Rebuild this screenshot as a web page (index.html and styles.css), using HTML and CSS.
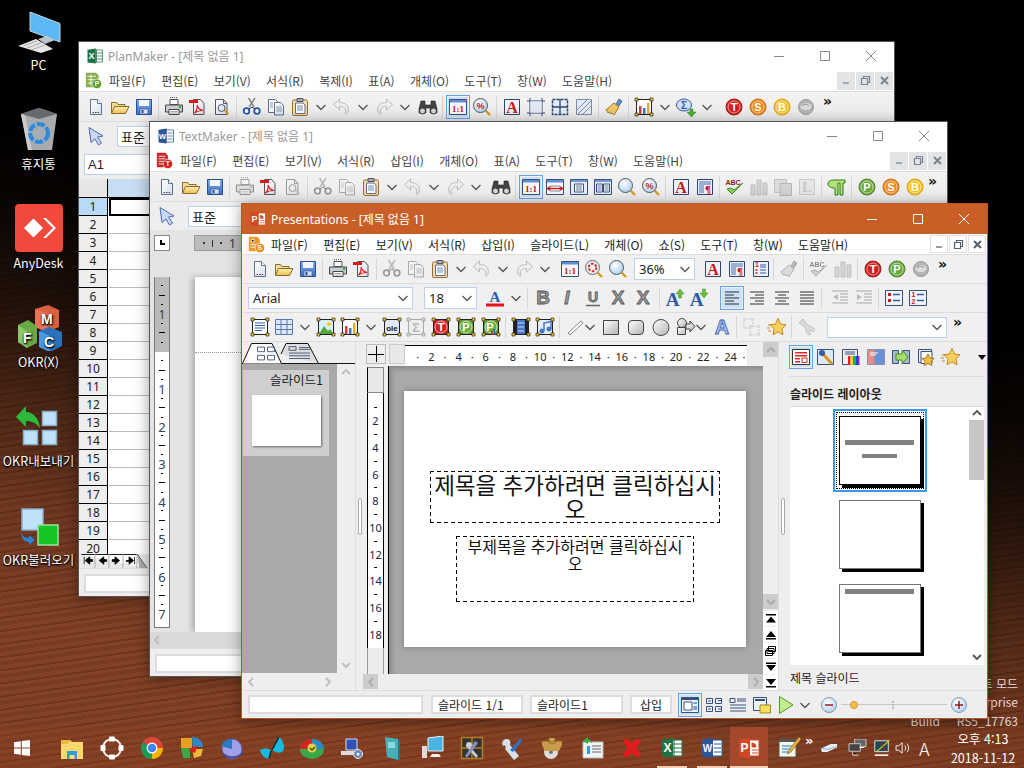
FILE: index.html
```html
<!DOCTYPE html>
<html lang="ko">
<head>
<meta charset="utf-8">
<title>SoftMaker Office</title>
<link rel="stylesheet" href="styles.css">
</head>
<body>
<svg class="defs" width="0" height="0" aria-hidden="true">
  <defs>
    <linearGradient id="gBlue" x1="0" y1="0" x2="0" y2="1"><stop offset="0" stop-color="#7fb0ee"/><stop offset="1" stop-color="#3f6fc4"/></linearGradient>
    <linearGradient id="gFold" x1="0" y1="0" x2="0" y2="1"><stop offset="0" stop-color="#fff0b0"/><stop offset="1" stop-color="#eebc50"/></linearGradient>
    <linearGradient id="gGray" x1="0" y1="0" x2="1" y2="1"><stop offset="0" stop-color="#fff"/><stop offset="1" stop-color="#b4b4b4"/></linearGradient>
    <radialGradient id="gSky" cx=".4" cy=".35" r=".8"><stop offset="0" stop-color="#fff"/><stop offset="1" stop-color="#9cc8ee"/></radialGradient>
    <linearGradient id="gPage" x1="0" y1="0" x2="1" y2="1"><stop offset="0" stop-color="#fff"/><stop offset="1" stop-color="#d6deec"/></linearGradient>
  </defs>
</svg>
<svg class="sprites" aria-hidden="true">
  <symbol id="new" viewBox="0 0 20 20"><path d="M4.500 2.500h7l4 4v11h-11z" fill="url(#gPage)" stroke="#5f6f8a"/><path d="M11.500 2.500v4h4" fill="#fff" stroke="#5f6f8a"/><path d="M6.500 15.500h1.500m1 0h1.500m1 0h1.500" stroke="#445"/></symbol>
  <symbol id="open" viewBox="0 0 20 20"><path d="M1.500 16V5.500h5l1.500 2h7V10" fill="#f3dc98" stroke="#8a6c2c"/><path d="M1.500 16.500 4.500 9.500h14.500l-3.500 7z" fill="url(#gFold)" stroke="#8a6c2c"/></symbol>
  <symbol id="save" viewBox="0 0 20 20"><path d="M2.500 2.500h15v15h-15z" fill="url(#gBlue)" stroke="#2c4c94"/><path d="M5 3h10v6H5z" fill="#f4f6fa"/><path d="M6 12h8v5H6z" fill="#d8e2f2" stroke="#2c4c94" stroke-width=".6"/><path d="M7.500 13h2v3h-2z" fill="#2c4c94"/></symbol>
  <symbol id="print" viewBox="0 0 20 20"><path d="M6 2.500h8v5H6z" fill="#fff" stroke="#555"/><path d="M6 .6h1m1 0h1m1 0h1m1 0h1" stroke="#555" /><path d="M1.500 8h17v7h-17z" fill="#c9cdd4" stroke="#444"/><path d="M5 12.500h10v5H5z" fill="#fff" stroke="#444"/><path d="M6.500 14.500h7m-7 1.500h7" stroke="#888" stroke-width=".7"/><circle cx="16" cy="10" r="1.200" fill="#28b030"/></symbol>
  <symbol id="pdf" viewBox="0 0 20 20"><path d="M5.500 2.500h7l3.500 4v11H5.500z" fill="url(#gPage)" stroke="#555"/><path d="M1 3h9v3H1z" fill="#e01818"/><path d="M6.500 16c2-2 3-5 2.500-8 1 3 3 5 6 5.500-3-.2-6 .8-8.500 2.500z" fill="none" stroke="#e01818" stroke-width="1.100"/></symbol>
  <symbol id="prev" viewBox="0 0 20 20"><path d="M3.500 2.500h8l3.500 4v11H3.500z" fill="url(#gPage)" stroke="#556"/><path d="M11.500 2.500v4h3.500" fill="none" stroke="#556"/><circle cx="9.500" cy="11" r="3.500" fill="#dbeaf8" stroke="#556"/><path d="m12.500 13.500 4 3.500" stroke="#d89a20" stroke-width="2"/></symbol>
  <symbol id="cut" viewBox="0 0 20 20"><path d="M7 10 13 1M12 10 6.500 1" stroke="#888" stroke-width="1.500" fill="none"/><circle cx="4.500" cy="14" r="2.800" fill="#fff" stroke="#2458a8" stroke-width="1.800"/><circle cx="15" cy="14" r="2.800" fill="#fff" stroke="#2458a8" stroke-width="1.800"/><path d="M7 12l3-2 3 2" fill="none" stroke="#333"/></symbol>
  <symbol id="copy" viewBox="0 0 20 20"><path d="M2.500 2.500h7l2 2v11h-9z" fill="#f4f7fc" stroke="#5f6f8a"/><path d="M8.500 5.500h6l3 3v9.500h-9z" fill="url(#gPage)" stroke="#5f6f8a"/><path d="M4 6h3M4 8h3M4 10h3M10 10h6m-6 2h6m-6 2h6" stroke="#7888a0" stroke-width=".8"/></symbol>
  <symbol id="paste" viewBox="0 0 20 20"><rect x="2.500" y="3" width="15" height="15.500" rx="1.500" fill="#f2dcb4" stroke="#9c6c28"/><path d="M7 1.500h6v3H7z" fill="#aab" stroke="#556"/><path d="M5.500 6h7.500l2 2v8.500H5.500z" fill="#fff" stroke="#5f6f8a"/><path d="M7 9h6m-6 2h6m-6 2h6" stroke="#5f7fb0" stroke-width=".9"/></symbol>
  <symbol id="undo" viewBox="0 0 20 20"><path d="M1.500 8.500 7.500 3v3.500c6 0 10 3 8.500 9.500-1 1.500-2 2-3 2 2-4 .5-7.500-5.500-7.500V14z" fill="#eee" stroke="#8d8d8d" transform="translate(0 -1)"/></symbol>
  <symbol id="redo" viewBox="0 0 20 20"><path d="M18.500 8.500 12.500 3v3.500c-6 0-10 3-8.500 9.500 1 1.500 2 2 3 2-2-4-.5-7.500 5.500-7.500V14z" fill="#eee" stroke="#8d8d8d" transform="translate(0 -1)"/></symbol>
  <symbol id="chev" viewBox="0 0 18 20"><path d="m4.500 8 4.500 4.500L13.500 8" fill="none" stroke="#555" stroke-width="1.300"/></symbol>
  <symbol id="binoc" viewBox="0 0 20 20"><path d="M3 4h4v4h6V4h4l2 8v4h-7v-5H8v5H1v-4z" fill="#444" stroke="#222" stroke-width=".6"/><circle cx="4.500" cy="14" r="3" fill="#d8d8d8" stroke="#333"/><circle cx="15.500" cy="14" r="3" fill="#d8d8d8" stroke="#333"/></symbol>
  <symbol id="one" viewBox="0 0 20 20"><path d="M1.500 2.500h17v15h-17z" fill="#f6f8fc" stroke="#39507c"/><path d="M2 3h16v2.500H2z" fill="#5f8fd0"/><text x="10" y="15" class="t-11">1:1</text></symbol>
  <symbol id="pct" viewBox="0 0 20 20"><circle cx="8.500" cy="8.500" r="7" fill="url(#gSky)" stroke="#555"/><text x="8.500" y="11.500" class="t-pct">%</text><path d="m13.500 13.500 4.500 4.500" stroke="#d89a20" stroke-width="2.400"/></symbol>
  <symbol id="mag" viewBox="0 0 20 20"><circle cx="8.500" cy="8.500" r="7" fill="url(#gSky)" stroke="#556"/><path d="m13.500 13.500 4.500 4.500" stroke="#d89a20" stroke-width="2.400"/></symbol>
  <symbol id="zmt" viewBox="0 0 20 20"><circle cx="8.500" cy="8.500" r="7" fill="#eee" stroke="#666"/><circle cx="8.500" cy="8.500" r="3.800" fill="none" stroke="#c83030" stroke-width="2" stroke-dasharray="2.500 1.500"/><path d="m13.500 13.500 4.500 4.500" stroke="#d89a20" stroke-width="2.400"/></symbol>
  <symbol id="a" viewBox="0 0 20 20"><path d="M2.500 2.500h15v15h-15z" fill="#eef2fa" stroke="#2c4672"/><text x="10" y="15.500" class="t-A">A</text></symbol>
  <symbol id="para" viewBox="0 0 20 20"><path d="M2.500 2.500h15v15h-15z" fill="#eef2fa" stroke="#2c4672"/><path d="M4 5h12M4 7h12M4 9h5M4 11h5M4 13h5M4 15h5" stroke="#345ca8" stroke-width=".9"/><text x="13" y="15.500" class="t-para">¶</text></symbol>
  <symbol id="nlist" viewBox="0 0 20 20"><path d="M2.500 2.500h15v15h-15z" fill="#eef2fa" stroke="#2c4672"/><text x="6" y="8" class="t-n">1</text><path d="M4.500 11h2m-2 3h2" stroke="#c81818" stroke-width="1.600"/><path d="M9 6h6m-6 2h6m-6 3h6m-6 3h6" stroke="#345ca8"/></symbol>
  <symbol id="brush" viewBox="0 0 20 20"><path d="m12 7 3-5 3 2-3 5z" fill="#5f8fd0" stroke="#39507c" stroke-width=".7"/><path d="M2 13 10 6l5 4-5 8-2-2-1 1-1-2-2 1-1-2z" fill="#eec866" stroke="#9c7a28"/></symbol>
  <symbol id="crop" viewBox="0 0 20 20"><path d="M4 1v18M16 1v18M1 4h18M1 16h18" stroke="#2c4672"/><path d="M4 4h12v12H4z" fill="#dbe6f6" opacity=".7"/></symbol>
  <symbol id="grid" viewBox="0 0 20 20"><path d="M2.500 2.500h15v15h-15z" fill="#e4ecf8" stroke="#2c4672" stroke-width="1.500" stroke-dasharray="3 1"/><path d="M10 2v16M2 10h16" stroke="#2c4672" stroke-width="1.300"/></symbol>
  <symbol id="hatch" viewBox="0 0 20 20"><path d="M2.500 2.500h15v15h-15z" fill="#e4ecf8" stroke="#7a8cb0"/><path d="m3 13 10-10M3 18 18 3m-10 15 10-10" stroke="#7a8cb0"/></symbol>
  <symbol id="h" viewBox="0 0 20 20"><path d="M1 1h3v3H1zM16 1h3v3h-3zM1 16h3v3H1zM16 16h3v3h-3z" fill="#f4c830" stroke="#222" stroke-width=".7"/></symbol>
  <symbol id="ochart" viewBox="0 0 20 20"><path d="M2.500 2.500h15v15h-15z" fill="#fff" stroke="#222"/><path d="M5 9h2.500v8H5z" fill="#d04040"/><path d="M9 11h2.500v6H9z" fill="#4070c8"/><path d="M13 6h2.500v11H13z" fill="#e0b030"/><use href="#h" width="20" height="20"/></symbol>
  <symbol id="sigma" viewBox="0 0 20 20"><ellipse cx="8" cy="8" rx="7.500" ry="6" fill="#cfe0f8" stroke="#345ca8"/><text x="8" y="12" class="t-sig">Σ</text><path d="M11 15h3v-3h3v3h3l-4.500 5z" fill="#48b030" stroke="#2c8020" stroke-width=".5"/></symbol>
  <symbol id="ct" viewBox="0 0 20 20"><circle cx="10" cy="10" r="8" fill="#d41f1f" stroke="#a81616"/><circle cx="10" cy="10" r="6" fill="none" stroke="#fff" stroke-opacity=".55"/><text x="10" y="14" class="t-c">T</text></symbol>
  <symbol id="cs" viewBox="0 0 20 20"><circle cx="10" cy="10" r="8" fill="#f08a1e" stroke="#cc6c10"/><circle cx="10" cy="10" r="6" fill="none" stroke="#fff" stroke-opacity=".55"/><text x="10" y="14" class="t-c">S</text></symbol>
  <symbol id="cb" viewBox="0 0 20 20"><circle cx="10" cy="10" r="8" fill="#f8c020" stroke="#e0a010"/><circle cx="10" cy="10" r="6" fill="none" stroke="#fff" stroke-opacity=".6"/><text x="10" y="14" class="t-c">B</text></symbol>
  <symbol id="cp" viewBox="0 0 20 20"><circle cx="10" cy="10" r="8" fill="#68a83a" stroke="#4c8a28"/><circle cx="10" cy="10" r="6" fill="none" stroke="#fff" stroke-opacity=".6"/><text x="10" y="14" class="t-c">P</text></symbol>
  <symbol id="cg" viewBox="0 0 20 20"><circle cx="10" cy="10" r="7.500" fill="#b4b4b4" stroke="#999"/><path d="M4 10c2-4 8-5 11-2 1 2-1 5-4 5-3 0-5 0-7-3z" fill="#ddd"/><path d="M6 9c2-2 5-2 7 0" stroke="#888" fill="none"/></symbol>
  <symbol id="abc" viewBox="0 0 20 20"><text x="8" y="7.500" class="t-abc">ABC</text><path d="m2 12 5 5L18 6l-9 7-3-2z" fill="#8ad060" stroke="#3e8e22"/></symbol>
  <symbol id="bars" viewBox="0 0 20 20"><path d="M2 8h4v10H2zM8 3h4v15H8zM14 6h4v12h-4z" fill="#bbb" stroke="#999"/></symbol>
  <symbol id="lay" viewBox="0 0 20 20"><path d="M1.500 2.500h12v13h-12z" fill="#ccc" stroke="#999"/><path d="M7 6.500h11.500v12H7z" fill="#bbb" stroke="#888"/></symbol>
  <symbol id="lbox" viewBox="0 0 20 20"><path d="M2.500 2.500h15v15h-15z" fill="#ddd" stroke="#aaa"/><text x="10" y="15" class="t-L">L</text></symbol>
  <symbol id="pil" viewBox="0 0 20 20"><path d="M7 3h11v3h-2v12h-3V6h-2v12H8v-7C3 11 1 9 1 7c0-3 3-4 6-4z" fill="#b6e07a" stroke="#2c7a1c"/></symbol>
  <symbol id="zw" viewBox="0 0 20 20"><path d="M1.500 2.500h17v15h-17z" fill="#f6f8fc" stroke="#39507c"/><path d="M2 3h16v2.500H2z" fill="#5f8fd0"/><path d="M5 9h10v5H5z" fill="#fff" stroke="#888"/><path d="M2.500 11.500h15" stroke="#c81818" stroke-width="1.500"/><path d="m1.500 11.500 3-2.500v5zM18.500 11.500l-3-2.500v5z" fill="#c81818"/></symbol>
  <symbol id="pg1" viewBox="0 0 20 20"><path d="M1.500 2.500h17v15h-17z" fill="#e8eef8" stroke="#39507c"/><path d="M2 3h16v2H2z" fill="#7a9ad0"/><path d="M5.500 7h9v8h-9z" fill="#fff" stroke="#39507c"/><path d="M7 9h6m-6 2h6m-6 2h6" stroke="#39507c" stroke-width=".8"/></symbol>
  <symbol id="pg2" viewBox="0 0 20 20"><path d="M1.500 2.500h17v15h-17z" fill="#e8eef8" stroke="#39507c"/><path d="M2 3h16v2H2z" fill="#7a9ad0"/><path d="M3.500 7h6v8h-6zM10.500 7h6v8h-6z" fill="#fff" stroke="#39507c"/><path d="M4.500 9h4m-4 2h4m-4 2h4m3-4h4m-4 2h4m-4 2h4" stroke="#39507c" stroke-width=".8"/></symbol>
  <symbol id="ptr" viewBox="0 0 20 20"><path d="M3 1.500 17 10l-5.500 1 4 6-3 2-3.500-6-4 3.500z" fill="#c9d7f2" stroke="#4a6ab0"/></symbol>
  <symbol id="fB" viewBox="0 0 20 20"><text x="10" y="16" class="t-f">B</text></symbol>
  <symbol id="fI" viewBox="0 0 20 20"><text x="10" y="16" class="t-f t-i">I</text></symbol>
  <symbol id="fU" viewBox="0 0 20 20"><text x="10" y="14" class="t-f t-u">U</text><path d="M3 17.500h14" stroke="#666" stroke-width="1.500"/></symbol>
  <symbol id="fX" viewBox="0 0 20 20"><text x="10" y="16" class="t-f">X</text></symbol>
  <symbol id="colA" viewBox="0 0 20 20"><text x="10" y="14" class="t-col">A</text><path d="M1 15.500h18v3H1z" fill="#e8101a"/></symbol>
  <symbol id="aup" viewBox="0 0 20 20"><text x="7.500" y="18" class="t-big">A</text><path d="M15 1l4 5h-2.500v4h-3V6H11z" fill="#68c040" stroke="#3e8e22" stroke-width=".5"/></symbol>
  <symbol id="adn" viewBox="0 0 20 20"><text x="7.500" y="18" class="t-big">A</text><path d="M15 10l4-5h-2.500V1h-3v4H11z" fill="#68c040" stroke="#3e8e22" stroke-width=".5"/></symbol>
  <symbol id="al" viewBox="0 0 20 20"><path d="M3 4h14M3 7h9M3 10h14M3 13h9M3 16h14" stroke="#333" stroke-width="1.200"/></symbol>
  <symbol id="ar" viewBox="0 0 20 20"><path d="M3 4h14M8 7h9M3 10h14M8 13h9M3 16h14" stroke="#333" stroke-width="1.200"/></symbol>
  <symbol id="ac" viewBox="0 0 20 20"><path d="M3 4h14M6 7h8M3 10h14M6 13h8M3 16h14" stroke="#333" stroke-width="1.200"/></symbol>
  <symbol id="aj" viewBox="0 0 20 20"><path d="M3 4h14M3 7h14M3 10h14M3 13h14M3 16h14" stroke="#333" stroke-width="1.200"/></symbol>
  <symbol id="ind" viewBox="0 0 20 20"><path d="M2 3h16M10 6h8M10 9h8M10 12h8M2 15h16" stroke="#aaa" stroke-width="1.200"/><path d="M8 6 3 9l5 3z" fill="#bbb"/></symbol>
  <symbol id="oud" viewBox="0 0 20 20"><path d="M2 3h16M10 6h8M10 9h8M10 12h8M2 15h16" stroke="#aaa" stroke-width="1.200"/><path d="m3 6 5 3-5 3z" fill="#bbb"/></symbol>
  <symbol id="bul" viewBox="0 0 20 20"><path d="M1.500 2.500h17v15h-17z" fill="#f0f4fa" stroke="#39507c"/><path d="M4 5h3v3H4zM4 11h3v3H4z" fill="#c82020"/><path d="M9 6.500h7M9 12.500h7" stroke="#345ca8" stroke-width="1.500"/></symbol>
  <symbol id="num" viewBox="0 0 20 20"><path d="M1.500 2.500h17v15h-17z" fill="#f0f4fa" stroke="#39507c"/><text x="5.500" y="9" class="t-n">1</text><text x="5.500" y="16" class="t-n">2</text><path d="M9 6.500h7M9 12.500h7" stroke="#345ca8" stroke-width="1.500"/></symbol>
  <symbol id="ofr" viewBox="0 0 20 20"><path d="M2.500 2.500h15v15h-15z" fill="#fff" stroke="#222"/><path d="M5 6h10M5 8.500h10M5 11h10M5 13.500h7" stroke="#345ca8"/><use href="#h" width="20" height="20"/></symbol>
  <symbol id="tab" viewBox="0 0 20 20"><path d="M1.500 2.500h17v15h-17z" fill="#dfe8f6" stroke="#5a78b0"/><path d="M7 3v14M13 3v14M2 7.500h16M2 12.500h16" stroke="#5a78b0"/></symbol>
  <symbol id="oimg" viewBox="0 0 20 20"><path d="M2.500 2.500h15v15h-15z" fill="#d8eef8" stroke="#222"/><circle cx="13" cy="7" r="2" fill="#f4c830"/><path d="M3 17l5-8 4 5 2-2 3.500 5z" fill="#58a838"/><use href="#h" width="20" height="20"/></symbol>
  <symbol id="oole" viewBox="0 0 20 20"><path d="M2.500 2.500h15v15h-15z" fill="#dfe8f6" stroke="#222"/><text x="10" y="14" class="t-ole">ole</text><use href="#h" width="20" height="20"/></symbol>
  <symbol id="osum" viewBox="0 0 20 20"><path d="M2.500 2.500h15v15h-15z" fill="#eee" stroke="#aaa"/><text x="10" y="15" class="t-osum">Σ</text><path d="M1 1h3v3H1zM16 1h3v3h-3zM1 16h3v3H1zM16 16h3v3h-3z" fill="#ddd" stroke="#999" stroke-width=".7"/></symbol>
  <symbol id="ot" viewBox="0 0 20 20"><path d="M2.500 2.500h15v15h-15z" fill="#c82020" stroke="#222"/><circle cx="10" cy="10" r="6" fill="#d82020" stroke="#fff" stroke-opacity=".7"/><text x="10" y="13.500" class="t-c">T</text><use href="#h" width="20" height="20"/></symbol>
  <symbol id="op" viewBox="0 0 20 20"><path d="M2.500 2.500h15v15h-15z" fill="#5c9a30" stroke="#222"/><circle cx="10" cy="10" r="6" fill="#6cae3c" stroke="#fff" stroke-opacity=".7"/><text x="10" y="13.500" class="t-c">P</text><use href="#h" width="20" height="20"/></symbol>
  <symbol id="opc" viewBox="0 0 20 20"><path d="M2.500 2.500h15v15h-15z" fill="#5c9a30" stroke="#222"/><circle cx="10" cy="10" r="6" fill="#6cae3c" stroke="#fff" stroke-opacity=".7"/><text x="9" y="13.500" class="t-c">P</text><path d="M10 14h1.500v4H10z" fill="#c82020"/><path d="M12.500 12H14v6h-1.500z" fill="#3060c0"/><use href="#h" width="20" height="20"/></symbol>
  <symbol id="ofilm" viewBox="0 0 20 20"><path d="M2.500 2.500h15v15h-15z" fill="#4878c8" stroke="#222"/><path d="M3 3h3v14H3zM14 3h3v14h-3z" fill="#222"/><path d="M7 6h6M7 10h6M7 14h6" stroke="#cfe0f8"/><use href="#h" width="20" height="20"/></symbol>
  <symbol id="omus" viewBox="0 0 20 20"><path d="M2.500 2.500h15v15h-15z" fill="#e4ecf8" stroke="#222"/><circle cx="7" cy="14" r="2.500" fill="#4878c8"/><circle cx="14" cy="12" r="2.500" fill="#4878c8"/><path d="M9 14V6l7-1.500V12" fill="none" stroke="#4878c8" stroke-width="1.500"/><use href="#h" width="20" height="20"/></symbol>
  <symbol id="line" viewBox="0 0 20 20"><path d="m3 16 13-12 2 2L5 18z" fill="#fff" stroke="#888"/></symbol>
  <symbol id="srect" viewBox="0 0 20 20"><path d="M2.500 3.500h15v14h-15z" fill="url(#gGray)" stroke="#444"/></symbol>
  <symbol id="sround" viewBox="0 0 20 20"><rect x="2.500" y="3.500" width="15" height="14" rx="3.500" fill="url(#gGray)" stroke="#444"/></symbol>
  <symbol id="scirc" viewBox="0 0 20 20"><circle cx="10" cy="10.500" r="8" fill="url(#gGray)" stroke="#444"/></symbol>
  <symbol id="sshape" viewBox="0 0 20 20"><circle cx="6" cy="6" r="4.500" fill="url(#gGray)" stroke="#444"/><path d="M1.500 10.500h8v7h-8z" fill="url(#gGray)" stroke="#444"/><path d="M10 7h4V4l5 5.500-5 5.500v-3h-4z" fill="url(#gGray)" stroke="#444"/></symbol>
  <symbol id="wart" viewBox="0 0 20 20"><text x="10" y="17" class="t-wa">A</text></symbol>
  <symbol id="grp" viewBox="0 0 20 20"><path d="M2 2h9v9H2zM8 9h9v9H8z" fill="none" stroke="#aaa" stroke-dasharray="2 1"/><path d="M1 1h3v3H1zM9 1h3v3H9zM1 9h3v3H1zM7 8h3v3H7zM15 8h3v3h-3zM7 16h3v3H7zM15 16h3v3h-3z" fill="#ccc"/></symbol>
  <symbol id="star" viewBox="0 0 20 20"><path d="m11 1.500 2.500 5.500 5.500.8-4 4 1 6-5-3-5 3 1-6-4-4 5.500-.8z" fill="#f8d060" stroke="#c08820"/><path d="M1 8h3M0 11h3M1 14h3" stroke="#c08820"/></symbol>
  <symbol id="wren" viewBox="0 0 20 20"><path d="M2 6 6 2l2 3 4 4 3 1 3 3-2 2-2-2-2 2 2 2-2 1-3-3V11L5 8z" fill="#ccc" stroke="#999"/></symbol>
  <symbol id="rlay" viewBox="0 0 20 20"><path d="M1.500 2.500h17v15h-17z" fill="#fff" stroke="#333"/><path d="M4 5h12v1.500H4zM4 8h12v1.500H4zM4 11h5v1.500H4zM4 14h5v1.500H4z" fill="#d82828"/><path d="M11 11h5v4.500h-5z" fill="none" stroke="#d82828"/></symbol>
  <symbol id="rwan" viewBox="0 0 20 20"><path d="M1.500 2.500h16v15h-16z" fill="#dfe8f6" stroke="#39507c"/><path d="M7 7l9 10" stroke="#d89a20" stroke-width="3"/><circle cx="6" cy="6" r="3" fill="#345ca8"/></symbol>
  <symbol id="rcol" viewBox="0 0 20 20"><path d="M1.500 2.500h15v15h-15z" fill="#eee" stroke="#39507c"/><path d="M4 5h10M4 7h10" stroke="#39507c"/><path d="M7 9h2.500v9H7z" fill="#e02020"/><path d="M9.500 9H12v9H9.500z" fill="#f0d020"/><path d="M12 9h2.500v9H12z" fill="#20b030"/><path d="M14.500 9H17v9h-2.500z" fill="#2040d0"/><path d="M17 9h1.500v9H17z" fill="#a020c0"/></symbol>
  <symbol id="rgra" viewBox="0 0 20 20"><path d="M1.500 2.500h7v15h-7z" fill="#e88a8a" stroke="#8890a8"/><path d="M9 2.500h9.500v15H9z" fill="#6a90d8" stroke="#8890a8"/><path d="M4 6h8M4 8h6" stroke="#fff"/></symbol>
  <symbol id="rarr" viewBox="0 0 20 20"><path d="M1.500 3.500h6v13h-6zM12.500 3.500h6v13h-6z" fill="#aab8d0" stroke="#39507c"/><path d="M5 7h6V3l6 7-6 7v-4H5z" fill="#a8e070" stroke="#3e8e22"/></symbol>
  <symbol id="rstd" viewBox="0 0 20 20"><path d="M2.500 2.500h13v13h-13z" fill="#eee" stroke="#39507c"/><path d="M5 4.500h11v12H5z" fill="#fff" stroke="#39507c"/><path d="m12 7 2 4 4 .5-3 3 1 4-4-2-4 2 1-4-3-3 4-.5z" fill="#f0c040" stroke="#a87820"/></symbol>
  <symbol id="st1" viewBox="0 0 20 20"><path d="M1.500 2.500h17v15h-17z" fill="#eef2fa" stroke="#39507c"/><path d="M2 3h16v2H2z" fill="#39507c"/><path d="M4 7h8v8H4z" fill="#fff" stroke="#39507c"/><path d="M13.500 7H17v2h-3.500zM13.500 11H17v4h-3.500z" fill="#7a9ad0"/></symbol>
  <symbol id="st2" viewBox="0 0 20 20"><path d="M2.500 3.500h6v5h-6zM11.500 3.500h6v5h-6zM2.500 11.500h6v5h-6zM11.500 11.500h6v5h-6z" fill="#eef2fa" stroke="#39507c"/><path d="M4 6h3m7-.5h3M4 14h3m7 0h3" stroke="#39507c"/></symbol>
  <symbol id="st3" viewBox="0 0 20 20"><path d="M2 3.500h5v4H2z" fill="#eef2fa" stroke="#39507c"/><path d="M9 4h9M9 6h9M2 10h16M2 13h16M2 16h16" stroke="#39507c" stroke-width="1.200"/></symbol>
  <symbol id="st4" viewBox="0 0 20 20"><path d="M1.500 2.500h13v13h-13z" fill="#eef2fa" stroke="#39507c"/><path d="M3 4h10v2H3z" fill="#39507c"/><path d="M8 10h10.500v8H8z" fill="#f4e060" stroke="#9c8a20"/></symbol>
  <symbol id="play" viewBox="0 0 20 20"><path d="M3.500 1.500 17 10 3.500 18.500z" fill="#c4ec8c" stroke="#4c9a28"/></symbol>
  <symbol id="zmin" viewBox="0 0 20 20"><circle cx="10" cy="10" r="7.500" fill="url(#gSky)" stroke="#8a9ab0"/><path d="M6 10h8" stroke="#a01818" stroke-width="1.500"/></symbol>
  <symbol id="zpls" viewBox="0 0 20 20"><circle cx="10" cy="10" r="7.500" fill="url(#gSky)" stroke="#8a9ab0"/><path d="M6 10h8M10 6v8" stroke="#a01818" stroke-width="1.500"/></symbol>
  <symbol id="xl" viewBox="0 0 24 24"><path d="M9 4h13v16H9z" fill="#fff" stroke="#1f7244"/><path d="M14 4v16M9 8h13M9 12h13M9 16h13" stroke="#1f7244"/><path d="M2 3.500 13 2v20L2 20.500z" fill="#1f7244"/><text x="7.500" y="16" class="t-app">X</text></symbol>
  <symbol id="wd" viewBox="0 0 24 24"><path d="M9 4h13v16H9z" fill="#fff" stroke="#2b579a"/><path d="M14 8h7M14 12h7M14 16h7" stroke="#2b579a"/><path d="M2 3.500 13 2v20L2 20.500z" fill="#2b579a"/><text x="7.500" y="16" class="t-app t-w">W</text></symbol>
  <symbol id="pp" viewBox="0 0 24 24"><path d="M9 4h13v16H9z" fill="#fff" stroke="#d24726"/><path d="M15 7a4 4 0 0 1 4 4h-4zM15 14h6M15 17h6" stroke="#d24726" fill="#d24726"/><path d="M2 3.500 13 2v20L2 20.500z" fill="#d24726"/><text x="7.500" y="16" class="t-app">P</text></symbol>
  <symbol id="mpm" viewBox="0 0 20 20"><path d="M1 1h12l3 3v14H1z" fill="#88b048"/><path d="M3 5h10M3 9h8M3 13h6M7 3v13" stroke="#fff"/><circle cx="14" cy="14" r="5.500" fill="#5c9a30" stroke="#fff" stroke-width=".7"/><text x="14" y="17" class="t-m">P</text></symbol>
  <symbol id="mtm" viewBox="0 0 20 20"><path d="M1 1h10l3 3v14H1z" fill="#c82828"/><path d="M3 5h8M3 8h8M3 11h6M3 14h6" stroke="#fff"/><circle cx="14" cy="14" r="5.500" fill="#d41f1f" stroke="#fff" stroke-width=".7"/><text x="14" y="17" class="t-m">T</text></symbol>
  <symbol id="mpr" viewBox="0 0 20 20"><path d="M1 1h10l3 3v14H1z" fill="#ee9a2a"/><path d="M4 4h3v3H4zM3 10h7M3 13h6" stroke="#fff"/><circle cx="14" cy="14" r="5.500" fill="#ee8a1a" stroke="#fff" stroke-width=".7"/><text x="14" y="17" class="t-m">S</text></symbol>
</svg>

<div class="desktop">
  <div class="watermark"><p>테스트 모드</p><p>Windows 10 Enterprise</p><p class="wm-b">Build     RS5_17763</p></div>

  <nav class="icons">
    <div class="dicon">
      <svg viewBox="0 0 48 48"><path d="M15 6 45 17.500V36L15 25z" fill="#5cb8f4" stroke="#c8d4dc"/><path d="M23 33 32 30 40 34 30 38z" fill="#b8c4cc"/><path d="M3 40 21 33 38 43 26 47z" fill="#e6e6e6"/><path d="M8 40 22 35m-10 7 14-5m-10 7 14-5" stroke="#999" stroke-width=".8"/></svg>
      <span>PC</span>
    </div>
    <div class="dicon">
      <svg viewBox="0 0 48 48"><path d="M6 9 24 3l18 6-5 36H13z" fill="#a8acb0"/><path d="M6 9 24 3l18 6-18 5z" fill="#666a6e"/><path d="M6 9l7 36h4L10 10z" fill="#c8ccd0"/><circle cx="24" cy="28" r="9" fill="none" stroke="#2a8adf" stroke-width="4" stroke-dasharray="8 2"/></svg>
      <span>휴지통</span>
    </div>
    <div class="dicon">
      <svg viewBox="0 0 48 48"><rect width="48" height="48" rx="4" fill="#f14a3c"/><path d="M18.500 14.500 28 24l-9.500 9.500L9 24z" fill="#fff"/><path d="m28 14 3 0 10 10-10 10h-3l10-10z" fill="#fff"/></svg>
      <span>AnyDesk</span>
    </div>
    <div class="dicon">
      <svg viewBox="0 0 48 48"><path d="M20 6 33 2l11 5v17l-12 5-12-5z" fill="#d8603e"/><path d="M20 6v18l12 5V10z" fill="#e8735a"/><path d="M3 22 13 17l9 6v17l-10 5-9-6z" fill="#6aa846"/><path d="M3 22v17l9 6V28z" fill="#8ac868"/><path d="M24 28l10-4 13 5v14l-12 6-11-5z" fill="#2a72ba"/><path d="M24 28v16l11 5V33z" fill="#4a9ae0"/><text x="26" y="21" class="t-okr">M</text><text x="8" y="40" class="t-okr">F</text><text x="29" y="44" class="t-okr">C</text></svg>
      <span>OKR(X)</span>
    </div>
    <div class="dicon">
      <svg viewBox="0 0 48 48"><path d="M1 15 11 4v6c7 0 13 6 14 16-4-5-8-7-14-7v6z" fill="#2cb83c"/><path d="M27.500 9.500h14v14h-14zM8.500 28.500h14v14h-14zM27.500 28.500h14v14h-14z" fill="#bfe2fb" stroke="#86aecb" stroke-width="1.500"/></svg>
      <span>OKR내보내기</span>
    </div>
    <div class="dicon">
      <svg viewBox="0 0 48 48"><path d="M7 8h21v21H7z" fill="#bfe2fb" stroke="#8ab0cc" stroke-width="1.500"/><path d="M23 24h20v20H23z" fill="#17c527" stroke="#9ee0a0" stroke-width="1.500"/><path d="M6 31c1 4 4 6 8 6v-3l6 5-6 5v-3c-5 0-8-4-8-10z" fill="#2a84d8"/></svg>
      <span>OKR불러오기</span>
    </div>
  </nav>

  <!-- PlanMaker -->
  <section class="win win-pm">
    <header class="title">
      <svg class="tic"><use href="#xl"/></svg>
      <span class="ttl">PlanMaker - [제목 없음 1]</span>
      <div class="wbtns">
        <svg class="wb"><path d="M0 5.500h10"/></svg><svg class="wb"><path d="M.5.500h9v9h-9z"/></svg><svg class="wb"><path d="m0 0 10 10M10 0 0 10"/></svg>
      </div>
    </header>
    <div class="menu">
      <svg class="mic"><use href="#mpm"/></svg>
      <span>파일(F)</span><span>편집(E)</span><span>보기(V)</span><span>서식(R)</span><span>복제(I)</span><span>표(A)</span><span>개체(O)</span><span>도구(T)</span><span>창(W)</span><span>도움말(H)</span>
      <div class="mdi"><b class="mb"><svg class="mg"><path d="M2 8h6"/></svg></b><b class="mb"><svg class="mg"><path d="M1.500 3.500h6v6h-6zM3.500 3.500v-2h6v6h-2"/></svg></b><b class="mb"><svg class="mg xg"><path d="m2 2 7 7M9 2 2 9"/></svg></b></div>
    </div>
    <div class="bar b-pm">
      <svg class="i"><use href="#new"/></svg><svg class="i"><use href="#open"/></svg><svg class="i"><use href="#save"/></svg><i class="sep"></i>
      <svg class="i"><use href="#print"/></svg><svg class="i"><use href="#pdf"/></svg><svg class="i"><use href="#prev"/></svg><i class="sep"></i>
      <svg class="i"><use href="#cut"/></svg><svg class="i"><use href="#copy"/></svg><svg class="i"><use href="#paste"/></svg><svg class="c"><use href="#chev"/></svg>
      <svg class="i off"><use href="#undo"/></svg><svg class="c"><use href="#chev"/></svg><svg class="i off"><use href="#redo"/></svg><svg class="c"><use href="#chev"/></svg>
      <i class="sp2"></i><svg class="i"><use href="#binoc"/></svg><i class="sep"></i>
      <svg class="i sel"><use href="#one"/></svg><svg class="i"><use href="#pct"/></svg><i class="sep"></i>
      <svg class="i"><use href="#a"/></svg><svg class="i"><use href="#crop"/></svg><svg class="i"><use href="#grid"/></svg><svg class="i"><use href="#hatch"/></svg><i class="sep"></i>
      <svg class="i"><use href="#brush"/></svg><i class="sep"></i>
      <svg class="i"><use href="#ochart"/></svg><svg class="c"><use href="#chev"/></svg><svg class="i"><use href="#sigma"/></svg><svg class="c"><use href="#chev"/></svg>
      <i class="sp6"></i><svg class="i"><use href="#ct"/></svg><svg class="i"><use href="#cs"/></svg><svg class="i"><use href="#cb"/></svg><svg class="i"><use href="#cg"/></svg><span class="more">»</span>
    </div>
    <div class="fmt">
      <svg class="i"><use href="#ptr"/></svg><span class="input pm-in">표준</span>
    </div>
    <div class="ref"><span class="input pm-ref">A1</span></div>
    <div class="sheet">
      <div class="shead"><b class="corner"></b><b class="colA">A</b></div>
      <div class="srow cur"><b>1</b><i></i></div>
      <div class="srow"><b>2</b><i></i></div><div class="srow"><b>3</b><i></i></div><div class="srow"><b>4</b><i></i></div><div class="srow"><b>5</b><i></i></div>
      <div class="srow"><b>6</b><i></i></div><div class="srow"><b>7</b><i></i></div><div class="srow"><b>8</b><i></i></div><div class="srow"><b>9</b><i></i></div>
      <div class="srow"><b>10</b><i></i></div><div class="srow"><b>11</b><i></i></div><div class="srow"><b>12</b><i></i></div><div class="srow"><b>13</b><i></i></div>
      <div class="srow"><b>14</b><i></i></div><div class="srow"><b>15</b><i></i></div><div class="srow"><b>16</b><i></i></div><div class="srow"><b>17</b><i></i></div>
      <div class="srow"><b>18</b><i></i></div><div class="srow"><b>19</b><i></i></div><div class="srow"><b>20</b><i></i></div>
    </div>
    <div class="tabs">
      <svg class="tabnav" viewBox="0 0 72 15"><path d="M0 .5h60l10 14.500" fill="#fff" stroke="#000"/><path d="M60 .5 70 15H62z" fill="#aaa"/><path d="M14.500 0v15M29.500 0v15M44.500 0v15M59.500 0v15" stroke="#aaa"/><path d="M3 3v8M4 7l5-4v3h3v2H9v3zM19 7l5-4v3h3v2h-3v3zM41 7l-5-4v3h-3v2h3v3zM48 7h3V3l5 4-5 4V8h-3zM57 3v8" fill="#000" stroke="#000" stroke-width=".8"/></svg>
    </div>
    <div class="status"><span class="field pm-f"></span></div>
  </section>

  <!-- TextMaker -->
  <section class="win win-tm">
    <header class="title">
      <svg class="tic"><use href="#wd"/></svg>
      <span class="ttl">TextMaker - [제목 없음 1]</span>
      <div class="wbtns">
        <svg class="wb"><path d="M0 5.500h10"/></svg><svg class="wb"><path d="M.5.500h9v9h-9z"/></svg><svg class="wb"><path d="m0 0 10 10M10 0 0 10"/></svg>
      </div>
    </header>
    <div class="menu">
      <svg class="mic"><use href="#mtm"/></svg>
      <span>파일(F)</span><span>편집(E)</span><span>보기(V)</span><span>서식(R)</span><span>삽입(I)</span><span>개체(O)</span><span>표(A)</span><span>도구(T)</span><span>창(W)</span><span>도움말(H)</span>
      <div class="mdi"><b class="mb"><svg class="mg"><path d="M2 8h6"/></svg></b><b class="mb"><svg class="mg"><path d="M1.500 3.500h6v6h-6zM3.500 3.500v-2h6v6h-2"/></svg></b><b class="mb"><svg class="mg xg"><path d="m2 2 7 7M9 2 2 9"/></svg></b></div>
    </div>
    <div class="bar b-pm">
      <svg class="i"><use href="#new"/></svg><svg class="i"><use href="#open"/></svg><svg class="i"><use href="#save"/></svg><i class="sep"></i>
      <svg class="i off"><use href="#print"/></svg><svg class="i"><use href="#pdf"/></svg><svg class="i off"><use href="#prev"/></svg><i class="sep"></i>
      <svg class="i off"><use href="#cut"/></svg><svg class="i off"><use href="#copy"/></svg><svg class="i"><use href="#paste"/></svg><svg class="c"><use href="#chev"/></svg>
      <svg class="i off"><use href="#undo"/></svg><svg class="c"><use href="#chev"/></svg><svg class="i off"><use href="#redo"/></svg><svg class="c"><use href="#chev"/></svg>
      <i class="sp4"></i><svg class="i"><use href="#binoc"/></svg><i class="sep"></i>
      <svg class="i sel"><use href="#one"/></svg><svg class="i"><use href="#zw"/></svg><svg class="i"><use href="#pg1"/></svg><svg class="i"><use href="#pg2"/></svg><svg class="i"><use href="#mag"/></svg><svg class="i"><use href="#pct"/></svg><i class="sep"></i>
      <svg class="i"><use href="#a"/></svg><svg class="i"><use href="#para"/></svg><i class="sep"></i>
      <svg class="i"><use href="#abc"/></svg><svg class="i off"><use href="#bars"/></svg><svg class="i off"><use href="#lay"/></svg><svg class="i off"><use href="#lbox"/></svg><i class="sep"></i>
      <svg class="i"><use href="#pil"/></svg><i class="sep"></i>
      <svg class="i"><use href="#cp"/></svg><svg class="i"><use href="#cs"/></svg><svg class="i"><use href="#cb"/></svg><span class="more tm-more">»</span>
    </div>
    <div class="fmt">
      <svg class="i"><use href="#ptr"/></svg><span class="input tm-in">표준</span>
    </div>
    <div class="tm-rule">
      <span class="lbtn"><i></i></span>
      <div class="hr-gray"><em></em><em class="long"></em><em></em><strong>1</strong></div>
    </div>
    <div class="tm-body">
      <div class="vr">
        <div class="vu"><i class="d"></i><i class="l"></i><i class="d"></i><b>1</b></div>
        <div class="vu"><i class="d"></i><i class="l"></i><i class="d"></i><span></span></div>
        <div class="vu"><i class="d"></i><i class="l"></i><i class="d"></i><b>1</b></div>
        <div class="vu"><i class="d"></i><i class="l"></i><i class="d"></i><b>2</b></div>
        <div class="vu"><i class="d"></i><i class="l"></i><i class="d"></i><b>3</b></div>
        <div class="vu"><i class="d"></i><i class="l"></i><i class="d"></i><b>4</b></div>
        <div class="vu"><i class="d"></i><i class="l"></i><i class="d"></i><b>5</b></div>
        <div class="vu"><i class="d"></i><i class="l"></i><i class="d"></i><b>6</b></div>
        <div class="vu"><i class="d"></i><i class="l"></i><i class="d"></i><b>7</b></div>
      </div>
      <div class="tm-page"><div class="tm-dot"></div></div>
    </div>
    <div class="tm-hs"><svg class="sc" viewBox="0 0 10 10"><path d="M7 1 3 5l4 4"/></svg></div>
    <div class="status"><span class="field tm-f"></span></div>
  </section>

  <!-- Presentations -->
  <section class="win win-pr">
    <header class="title act">
      <svg class="tic"><use href="#pp"/></svg>
      <span class="ttl">Presentations - [제목 없음 1]</span>
      <div class="wbtns">
        <svg class="wb"><path d="M0 5.500h10"/></svg><svg class="wb"><path d="M.5.500h9v9h-9z"/></svg><svg class="wb"><path d="m0 0 10 10M10 0 0 10"/></svg>
      </div>
    </header>
    <div class="menu act-menu">
      <svg class="mic"><use href="#mpr"/></svg>
      <span>파일(F)</span><span>편집(E)</span><span>보기(V)</span><span>서식(R)</span><span>삽입(I)</span><span>슬라이드(L)</span><span>개체(O)</span><span>쇼(S)</span><span>도구(T)</span><span>창(W)</span><span>도움말(H)</span>
      <div class="mdi"><b class="mb"><svg class="mg"><path d="M2 8h6"/></svg></b><b class="mb"><svg class="mg"><path d="M1.500 3.500h6v6h-6zM3.500 3.500v-2h6v6h-2"/></svg></b><b class="mb"><svg class="mg xg"><path d="m2 2 7 7M9 2 2 9"/></svg></b></div>
    </div>
    <div class="bar b-p">
      <svg class="i"><use href="#new"/></svg><svg class="i"><use href="#open"/></svg><svg class="i"><use href="#save"/></svg><i class="sep"></i>
      <svg class="i"><use href="#print"/></svg><svg class="i"><use href="#pdf"/></svg><i class="sep"></i>
      <svg class="i off"><use href="#cut"/></svg><svg class="i off"><use href="#copy"/></svg><svg class="i"><use href="#paste"/></svg><svg class="c"><use href="#chev"/></svg>
      <svg class="i off"><use href="#undo"/></svg><svg class="c"><use href="#chev"/></svg><svg class="i off"><use href="#redo"/></svg><svg class="c"><use href="#chev"/></svg>
      <i class="sp4"></i><svg class="i"><use href="#one"/></svg><svg class="i"><use href="#zmt"/></svg><svg class="i"><use href="#mag"/></svg>
      <i class="sp4"></i><span class="combo z"><u>36%</u><svg class="c"><use href="#chev"/></svg></span><i class="sp6"></i>
      <svg class="i"><use href="#a"/></svg><svg class="i"><use href="#para"/></svg><svg class="i"><use href="#nlist"/></svg><i class="sep nar"></i>
      <svg class="i off"><use href="#brush"/></svg><i class="sep"></i>
      <svg class="i off"><use href="#abc"/></svg><svg class="i off"><use href="#bars"/></svg><i class="sep"></i>
      <svg class="i"><use href="#ct"/></svg><svg class="i"><use href="#cp"/></svg><svg class="i"><use href="#cg"/></svg><span class="more">»</span>
    </div>
    <div class="bar b-p">
      <span class="combo font"><u>Arial</u><svg class="c"><use href="#chev"/></svg></span><i class="sp11"></i>
      <span class="combo size"><u>18</u><svg class="c"><use href="#chev"/></svg></span><i class="sp6"></i>
      <svg class="i"><use href="#colA"/></svg><svg class="c"><use href="#chev"/></svg><i class="sep"></i>
      <svg class="i"><use href="#fB"/></svg><svg class="i"><use href="#fI"/></svg><i class="sp2"></i><svg class="i"><use href="#fU"/></svg><i class="sp1"></i><svg class="i"><use href="#fX"/></svg><i class="sp1"></i><svg class="i"><use href="#fX"/></svg>
      <i class="sp2"></i><i class="sep"></i>
      <svg class="i"><use href="#aup"/></svg><svg class="i"><use href="#adn"/></svg><i class="sp9"></i>
      <svg class="i sel"><use href="#al"/></svg><i class="sp1"></i><svg class="i"><use href="#ar"/></svg><i class="sp1"></i><svg class="i"><use href="#ac"/></svg><i class="sp1"></i><svg class="i"><use href="#aj"/></svg><i class="sep"></i>
      <i class="sp3"></i><svg class="i"><use href="#ind"/></svg><svg class="i"><use href="#oud"/></svg><i class="sep"></i>
      <svg class="i"><use href="#bul"/></svg><svg class="i"><use href="#num"/></svg>
    </div>
    <div class="bar b-p">
      <svg class="i"><use href="#ofr"/></svg><svg class="i"><use href="#tab"/></svg><svg class="c"><use href="#chev"/></svg>
      <svg class="i"><use href="#oimg"/></svg><svg class="i"><use href="#ochart"/></svg><svg class="c"><use href="#chev"/></svg>
      <svg class="i"><use href="#oole"/></svg><svg class="i"><use href="#osum"/></svg><i class="sp1"></i><svg class="i"><use href="#ot"/></svg><i class="sp1"></i><svg class="i"><use href="#op"/></svg><i class="sp1"></i><svg class="i"><use href="#opc"/></svg><i class="sep"></i>
      <svg class="i"><use href="#ofilm"/></svg><svg class="i"><use href="#omus"/></svg><i class="sep"></i>
      <svg class="i"><use href="#line"/></svg><svg class="c neg"><use href="#chev"/></svg>
      <svg class="i"><use href="#srect"/></svg><i class="sp1"></i><svg class="i"><use href="#sround"/></svg><i class="sp1"></i><svg class="i"><use href="#scirc"/></svg><i class="sp1"></i><svg class="i"><use href="#sshape"/></svg><svg class="c neg"><use href="#chev"/></svg>
      <svg class="i"><use href="#wart"/></svg><i class="sep"></i>
      <svg class="i off"><use href="#grp"/></svg><i class="sp1"></i><svg class="i"><use href="#star"/></svg><i class="sep"></i>
      <svg class="i off"><use href="#wren"/></svg><i class="sp8"></i>
      <span class="combo obj"><u></u><svg class="c"><use href="#chev"/></svg></span><span class="more obj-more">»</span>
    </div>
    <div class="pbody">
      <aside class="lpanel">
        <svg class="ptabs" viewBox="0 0 113 23" preserveAspectRatio="none"><path d="M0 22.500h113" stroke="#000"/><path d="M39.500 22.500 30 .5H9.500L.5 22.500" fill="#fff" stroke="#000"/><path d="M76.500 22.500 66 .5H44L39 12" fill="#ddd" stroke="#000"/><path d="M15.500 4.500h7v5h-7zM25.500 4.500h7v5h-7zM15.500 13.500h7v5h-7zM25.500 13.500h7v5h-7z" fill="none" stroke="#4a5a78"/><path d="M47 4h7v4h-7zM57 5h11M57 7h11M47 11h21M47 14h21M47 17h21" fill="none" stroke="#4a5a78"/></svg>
        <div class="lrow">
          <div class="thumbs">
            <div class="thumb"><span>슬라이드1</span><div class="tslide"></div></div>
          </div>
          <div class="lsb"><svg class="sc" viewBox="0 0 10 10"><path d="M1 7l4-4 4 4"/></svg><svg class="sc" viewBox="0 0 10 10"><path d="M1 3l4 4 4-4"/></svg></div>
        </div>
        <div class="lhs"><svg class="sc" viewBox="0 0 10 10"><path d="M7 1 3 5l4 4"/></svg><svg class="sc" viewBox="0 0 10 10"><path d="M3 1l4 4-4 4"/></svg></div>
      </aside>
      <div class="grip"><i></i></div>
      <div class="center">
        <div class="rrow">
          <span class="cross"></span>
          <div class="hruler">
            <span class="hm"></span>
            <div class="hw"><i>·</i><b>2</b><i>·</i><b>4</b><i>·</i><b>6</b><i>·</i><b>8</b><i>·</i><b>10</b><i>·</i><b>12</b><i>·</i><b>14</b><i>·</i><b>16</b><i>·</i><b>18</b><i>·</i><b>20</b><i>·</i><b>22</b><i>·</i><b>24</b><i>·</i></div>
          </div>
        </div>
        <div class="crow">
          <div class="vcol">
            <span class="vtop"></span>
            <div class="vw"><i></i><b>2</b><i></i><b>4</b><i></i><b>6</b><i></i><b>8</b><i></i><b>10</b><i></i><b>12</b><i></i><b>14</b><i></i><b>16</b><i></i><b>18</b></div>
            <span class="vbot"></span>
          </div>
          <div class="canvas">
            <div class="slide">
              <div class="ph ph1">제목을 추가하려면 클릭하십시<br>오</div>
              <div class="ph ph2">부제목을 추가하려면 클릭하십시<br>오</div>
            </div>
          </div>
        </div>
        <div class="chs"><span class="sbb"><svg class="sc" viewBox="0 0 10 10"><path d="M7 1 3 5l4 4"/></svg></span><span class="sbb"><svg class="sc" viewBox="0 0 10 10"><path d="M3 1l4 4-4 4"/></svg></span></div>
      </div>
      <div class="vsb">
        <span class="sbb up"><svg class="sc" viewBox="0 0 10 10"><path d="M1 7l4-4 4 4"/></svg></span>
        <span class="vfill"></span>
        <span class="sbb dn"><svg class="sc" viewBox="0 0 10 10"><path d="M1 3l4 4 4-4"/></svg></span>
        <span class="nav"><svg viewBox="0 0 12 12"><path d="M1 1h10v1.500H1zM6 3.500l5 6H1z"/></svg></span>
        <span class="nav"><svg viewBox="0 0 12 12"><path d="M6 2l5 6H1zM1 9h10v1.500H1z"/></svg></span>
        <span class="nav"><svg viewBox="0 0 12 12" class="navc"><path d="M3.500 1.500h7v5h-7zM2 3.500h7v5H2zM.5 5.500h7v5h-7z"/></svg></span>
        <span class="nav"><svg viewBox="0 0 12 12"><path d="M1 1.500h10V3H1zM1 4h10l-5 6z"/></svg></span>
        <span class="nav"><svg viewBox="0 0 12 12"><path d="M6 8 1 2h10zM1 9h10v1.500H1z"/></svg></span>
      </div>
      <div class="grip g2"><i></i></div>
      <aside class="rpanel">
        <div class="ricons">
          <svg class="i sel"><use href="#rlay"/></svg><i class="sp1"></i><svg class="i"><use href="#rwan"/></svg><i class="sp1"></i><svg class="i"><use href="#rcol"/></svg><i class="sp1"></i><svg class="i"><use href="#rgra"/></svg><i class="sp1"></i><svg class="i"><use href="#rarr"/></svg><i class="sp1"></i><svg class="i"><use href="#rstd"/></svg><i class="sp1"></i><svg class="i"><use href="#star"/></svg><em class="tri"></em>
        </div>
        <h2 class="rh">슬라이드 레이아웃</h2>
        <div class="llist">
          <div class="lwrap">
            <div class="picked"><div class="lt"><i class="b1"></i><i class="b2"></i></div></div>
            <div class="lt plain"></div>
            <div class="lt plain top"><i class="b3"></i></div>
          </div>
          <div class="lsbar"><svg class="sc dk" viewBox="0 0 10 10"><path d="M1 7l4-4 4 4"/></svg><i></i><svg class="sc dk" viewBox="0 0 10 10"><path d="M1 3l4 4 4-4"/></svg></div>
        </div>
        <p class="lname">제목 슬라이드</p>
      </aside>
    </div>
    <footer class="pstat">
      <span class="field f1"></span><span class="field f2">슬라이드 1/1</span><span class="field f3">슬라이드1</span><span class="field f4">삽입</span>
      <svg class="i sel"><use href="#st1"/></svg><svg class="i"><use href="#st2"/></svg><svg class="i"><use href="#st3"/></svg><svg class="i"><use href="#st4"/></svg><svg class="i"><use href="#play"/></svg><svg class="c chs-n"><use href="#chev"/></svg>
      <svg class="i zb zb1"><use href="#zmin"/></svg>
      <div class="slider"><i class="knob"></i><i class="tick"></i></div>
      <svg class="i zb"><use href="#zpls"/></svg>
    </footer>
  </section>

  <footer class="taskbar">
    <span class="tb start"><svg viewBox="0 0 16 16"><path d="M0 2.200 6.800 1.200v6.400H0zM7.800 1 16 0v7.600H7.800zM0 8.600h6.800v6.200L0 13.800zM7.800 8.600H16V16l-8.200-1.100z" fill="#fff"/></svg></span>
    <span class="tb"><svg viewBox="0 0 24 24"><path d="M1 4h9l2 2h11v17H1z" fill="#fbd96f"/><path d="M1 4h9l2 2h-3L7 8H1z" fill="#e8b93f"/><path d="M7 15h10v8h-2.500v-4h-5v4H7z" fill="#2d9fd8"/></svg></span>
    <span class="tb"><svg viewBox="0 0 24 24"><circle cx="12" cy="12" r="9" fill="none" stroke="#fff" stroke-width="1.800" stroke-dasharray="9.140 5" stroke-dashoffset="-2.500"/><rect x="9" y=".5" width="6" height="5" rx="1" fill="#fff"/><rect x="9" y="18.500" width="6" height="5" rx="1" fill="#fff"/><rect x=".5" y="9" width="5" height="6" rx="1" fill="#fff"/><rect x="18.500" y="9" width="5" height="6" rx="1" fill="#fff"/></svg></span>
    <span class="tb"><svg viewBox="0 0 24 24"><circle cx="12" cy="12" r="11" fill="#db4437"/><path d="M12 12 3 6a11 11 0 0 0 9 17z" fill="#0f9d58"/><path d="M12 12h11a11 11 0 0 1-11 11z" fill="#f4b400"/><circle cx="12" cy="12" r="5.500" fill="#fff"/><circle cx="12" cy="12" r="4.300" fill="#4285f4"/></svg></span>
    <span class="tb"><svg viewBox="0 0 24 24"><path d="M1 2h11v10H1z" fill="#e8a020"/><path d="M1 12h9v10H3z" fill="#38a848"/><path d="M12 1c6 0 11 4 11 10H13z" fill="#2a8ac8"/><path d="M12 13h11l-2 7-7 2z" fill="#f0b838"/><path d="M8 14 18 9l-3 8z" fill="#d82020"/></svg></span>
    <span class="tb"><svg viewBox="0 0 24 24"><circle cx="12" cy="13" r="10" fill="#a0a0e8" stroke="#5858b0"/><path d="M12 13V3A11 11 0 0 0 1 10z" fill="#2a7ac8"/><path d="M2 15c3 6 16 8 21 0v2c-4 7-17 7-21 0z" fill="#484890"/></svg></span>
    <span class="tb"><svg viewBox="0 0 24 24"><path d="M0 14C5 12 9 12 11 15L9 22c-3 2-8-3-9-8zM12 14 19 1c3 2 5 6 5 11-1 6-6 6-12 2z" fill="#18b8e0"/><path d="M12 14 19 1M11 15 9 22" stroke="#0a2a40" stroke-width="1.500"/></svg></span>
    <span class="tb"><svg viewBox="0 0 24 24"><ellipse cx="12" cy="13" rx="12" ry="10" fill="#38a848"/><path d="M0 13a12 10 0 0 1 12-10v10z" fill="#d82020"/><path d="M12 3a12 10 0 0 1 12 10H12z" fill="#2a8ac8"/><circle cx="12" cy="12" r="4.500" fill="#e8d040"/><path d="m10 12 2 2 3-3" fill="none" stroke="#286018" stroke-width="1.500"/></svg></span>
    <span class="tb"><svg viewBox="0 0 24 24"><path d="M6 3h11v11H6z" fill="#3050b8" stroke="#dde"/><path d="M1 15h14l3 4H1z" fill="#ddd"/><circle cx="18" cy="18" r="4.500" fill="#6a88b8" stroke="#eee"/><circle cx="18" cy="18" r="1.500" fill="#fff"/></svg></span>
    <span class="tb"><svg viewBox="0 0 24 24"><path d="M5 1l13 2v21L7 21z" fill="#46aeb8"/><path d="M18 3l2 1v20h-2z" fill="#2a7680"/><path d="M8 6h7v6H8z" fill="#8ad8d8"/></svg></span>
    <span class="tb"><svg viewBox="0 0 24 24"><path d="M8 2 23 0v15H8z" fill="#4ab4e0" stroke="#eee"/><path d="M12 18h7l2 3H10z" fill="#eee"/><path d="M2 10h5v12H2z" fill="#ddd"/></svg></span>
    <span class="tb"><svg viewBox="0 0 24 24"><path d="M1.500 1.500h21v21h-21zM12 1v22M1 12h22" fill="#333" stroke="#b08020" stroke-width="1.500"/><circle cx="9" cy="9" r="3" fill="#ccc"/><path d="M8 8l10 12-2 2L6 10z" fill="#ccc"/><path d="M15 5 5 20l2 2L18 7z" fill="#8090c0"/></svg></span>
    <span class="tb"><svg viewBox="0 0 24 24"><path d="M7 3C3 3 1 7 3 10l1-1 2 2-1 2 9 11 5-4-9-11c1-3 0-6-3-6z" fill="#d8e0ea"/><path d="M21 2 10 14l3 2 9-11z" fill="#2a74c8"/></svg></span>
    <span class="tb"><svg viewBox="0 0 24 24"><circle cx="11" cy="16" r="7" fill="#ddd"/><circle cx="11" cy="16" r="2" fill="#777"/><path d="M2 5h20v4l-3 6H5L2 9z" fill="#c89a4a"/><path d="M2 5h20M9 2h6v5H9z" fill="#e0b868" stroke="#8a6020"/></svg></span>
    <span class="tb"><svg viewBox="0 0 24 24"><path d="M3 6h20v16H3z" fill="#eef4f0" stroke="#bbb"/><path d="M12 10h9m-9 3h9m-9 3h9" stroke="#666"/><path d="M7 10h3v8H7z" fill="#3a98d8"/><path d="M3 5 8 1v2.500c3 0 4 2 4 4-1-1.500-2.500-2-4-2V8z" fill="#38b040"/></svg></span>
    <span class="tb"><svg viewBox="0 0 24 24"><path d="M3 6l3-4 6 5 6-5 3 4-5 6 5 6-3 4-6-5-6 5-3-4 5-6z" fill="#e01d1d"/></svg></span>
    <span class="tb uline"><svg viewBox="0 0 24 24"><use href="#xl"/></svg></span>
    <span class="tb uline"><svg viewBox="0 0 24 24"><use href="#wd"/></svg></span>
    <span class="tb active"><svg viewBox="0 0 24 24"><use href="#pp"/></svg></span>
    <span class="tb note"><svg viewBox="0 0 24 24"><path d="M2 4h17v17H2z" fill="#f4f8e8" stroke="#555"/><path d="M2 3h17v3H2z" fill="#555" stroke-dasharray="1 1"/><path d="M5 10h11M5 13h11M5 16h8" stroke="#1a7ad0"/><path d="m22 1-10 13-2 4 4-2L24 3z" fill="#e8b840" stroke="#8a6020" stroke-width=".7"/></svg></span>
    <span class="tmore">»</span>
    <svg class="tray t-usb" viewBox="0 0 20 12"><path d="M1 7 12 2h7v4L8 11H2z" fill="#e8eef4"/><path d="M1 7l8 1 10-3" fill="none" stroke="#7aa8d0"/></svg>
    <svg class="tray t-net" viewBox="0 0 20 18"><path d="M7 0h12v8H7z" fill="#666" stroke="#ccc"/><path d="M1 5h12v8H1z" fill="#444" stroke="#ccc"/><path d="M5 14v3h6M12 9h5" stroke="#fff"/></svg>
    <svg class="tray t-mon" viewBox="0 0 20 20"><path d="M2 2h15v12H2z" fill="#1a4a50" stroke="#eee"/><path d="M2 18h15" stroke="#eee" stroke-width="2"/><path d="M5 14 19 2l-1-1L3 14z" fill="#d8d020"/><path d="M8 4l6 9" stroke="#d82020"/></svg>
    <svg class="tray t-snd" viewBox="0 0 18 16"><path d="M1 5.500h3L8 2v12L4 10.500H1z" fill="none" stroke="#fff"/><path d="M11 5c1.500 2 1.500 4 0 6M13.500 3c2.500 3 2.500 7 0 10" fill="none" stroke="#fff"/></svg>
    <span class="ime">A</span>
    <div class="clock"><span>오후 4:13</span><span>2018-11-12</span></div>
  </footer>
</div>
</body>
</html>
```

FILE: styles.css
```css
* { box-sizing: border-box; }
html, body { margin: 0; padding: 0; height: 100%; }
body {
  font-family: "Noto Sans CJK KR", "Noto Sans", sans-serif;
  font-size: 12px;
  color: #222;
  overflow: hidden;
}
.defs { position: absolute; }
.sprites { display: none; }
p, h2 { margin: 0; }
i, em, u, b { font-style: normal; text-decoration: none; }

.desktop {
  position: relative;
  width: 1024px;
  height: 768px;
  overflow: hidden;
  display: flex;
  flex-direction: column;
  background:
    linear-gradient(192deg, #000 0, #000 34%, rgba(0,0,0,.93) 42%, rgba(0,0,0,.75) 52%, rgba(0,0,0,.4) 63%, rgba(0,0,0,.14) 73%, rgba(0,0,0,0) 85%),
    repeating-linear-gradient(172deg, rgba(40,15,5,.2) 0 2px, rgba(170,90,50,.13) 2px 5px, rgba(40,15,5,.08) 5px 9px, rgba(170,90,50,.1) 9px 13px),
    #7e3f24;
}

/* Desktop icons */
.icons { width: 77px; display: flex; flex-direction: column; }
.dicon {
  height: 99px;
  padding-top: 6px;
  display: flex;
  flex-direction: column;
  align-items: center;
  color: #fff;
  text-shadow: 0 1px 2px #000, 1px 1px 2px #000;
}
.dicon svg { width: 48px; height: 48px; flex: none; }
.dicon span { line-height: 22px; font-size: 12.500px; white-space: nowrap; }
.t-okr { font: bold 14px "Liberation Sans", sans-serif; fill: #fff; }

.watermark {
  position: absolute;
  right: 6px;
  top: 675px;
  text-align: right;
  color: #e6d8cf;
  font-size: 12px;
  line-height: 18px;
  white-space: pre;
}
.watermark .wm-b { line-height: 20px; }

/* Windows */
.win {
  position: absolute;
  display: flex;
  flex-direction: column;
  background: #eee;
  border: 1px solid #555;
  box-shadow: 0 2px 14px rgba(0,0,0,.38);
  overflow: hidden;
}
.win-pm { left: 78px; top: 41px; width: 817px; height: 556px; }
.win-tm { left: 149px; top: 121px; width: 799px; height: 556px; }
.win-pr { left: 241px; top: 203px; width: 747px; height: 516px; border-color: #b5552a; }

.title { height: 28px; display: flex; align-items: center; background: #fff; padding-left: 7px; flex: none; }
.win-pr .title { height: 30px; background: #c95f27; }
.tic { width: 18px; height: 18px; flex: none; }
.ttl { margin-left: 4px; color: #9a9a9a; font-family: "Noto Sans", "Noto Sans CJK KR", sans-serif; font-size: 12px; white-space: nowrap; }
.title.act .ttl { color: #fff; }
.wbtns { margin-left: auto; display: flex; }
.wb { width: 46px; height: 28px; fill: none; stroke: #888; flex: none; }
.title.act .wb { stroke: #fff; }
.wb path { transform: translate(18px, 9px); }

.menu {
  height: 22px;
  flex: none;
  display: flex;
  align-items: center;
  gap: 15.300px;
  background: #fff;
  padding-left: 6px;
  color: #444;
  white-space: nowrap;
  border-bottom: 1px solid #ddd;
}
.act-menu { height: 21px; color: #222; }
.mic { width: 17px; height: 17px; flex: none; margin-right: -8.300px; }
.act-menu .mic { margin-right: -9.300px; }
.mdi { margin-left: auto; display: flex; gap: 1px; padding-right: 1px; }
.mb { width: 18px; height: 18px; background: #e2e4e6; display: flex; align-items: center; justify-content: center; }
.act-menu .mb { background: #fff; border: 1px solid #e0e0e0; }
.mg { width: 11px; height: 11px; fill: none; stroke: #7a8490; stroke-width: 1.200; }
.xg { stroke-width: 2; }
.act-menu .mg { stroke: #56606c; }

.bar {
  flex: none;
  height: 30px;
  display: flex;
  align-items: center;
  padding-left: 5px;
  background: linear-gradient(#f2f2f2, #ececec);
  border-bottom: 1px solid #dcdcdc;
}
.b-p { height: 29px; padding-left: 6px; background: #f0f0f0; }
.i { width: 20px; height: 20px; margin: 0 2px; flex: none; }
.c { width: 18px; height: 20px; flex: none; }
.c.neg { margin-left: -6px; }
.off { filter: grayscale(1) opacity(.55); }
.sel { background: #cbe1f8; outline: 1px solid #62a4ea; outline-offset: 1px; }
.sep { width: 1px; height: 22px; margin: 0 3px 0 2px; background: #d6d6d6; flex: none; }
.sep.nar { margin-left: 0; }
.sp1 { width: 1px; flex: none; }
.sp2 { width: 2px; flex: none; }
.sp3 { width: 3px; flex: none; }
.sp4 { width: 4px; flex: none; }
.sp6 { width: 6px; flex: none; }
.sp8 { width: 8px; flex: none; }
.sp9 { width: 9px; flex: none; }
.sp11 { width: 11px; flex: none; }
.more { margin-left: 5px; align-self: flex-start; margin-top: 1px; font: bold 14px/16px "DejaVu Sans", sans-serif; color: #111; }
.tm-more { margin-left: 1px; }
.obj-more { margin-left: 6px; }

.t-11 { font: bold 9px "Liberation Serif", serif; fill: #c01818; text-anchor: middle; }
.t-pct { font: bold 9px "Liberation Sans", sans-serif; fill: #c01818; text-anchor: middle; }
.t-A { font: bold 16px "Liberation Serif", serif; fill: #c81818; text-anchor: middle; }
.t-para { font: bold 11px "Liberation Serif", serif; fill: #c81818; text-anchor: middle; }
.t-n { font: bold 7px "Liberation Sans", sans-serif; fill: #c81818; text-anchor: middle; }
.t-sig { font: bold 10px "Liberation Sans", sans-serif; fill: #345ca8; text-anchor: middle; }
.t-c { font: bold 11px "Liberation Sans", sans-serif; fill: #fff; text-anchor: middle; }
.t-m { font: bold 8px "Liberation Sans", sans-serif; fill: #fff; text-anchor: middle; }
.t-abc { font: bold 7px "Liberation Sans", sans-serif; fill: #8a1818; text-anchor: middle; }
.t-L { font: bold 15px "Liberation Serif", serif; fill: #aaa; text-anchor: middle; }
.t-f { font: bold 19px "Liberation Sans", sans-serif; fill: #9a9a9a; stroke: #555; stroke-width: .8; text-anchor: middle; }
.t-i { font-style: italic; }
.t-u { font-size: 14px; }
.t-col { font: bold 15px "Liberation Serif", serif; fill: #2c5ca8; text-anchor: middle; }
.t-big { font: bold 19px "Liberation Serif", serif; fill: #2c5ca8; text-anchor: middle; }
.t-ole { font: bold 8px "Liberation Sans", sans-serif; fill: #222; text-anchor: middle; }
.t-osum { font: bold 13px "Liberation Sans", sans-serif; fill: #bbb; text-anchor: middle; }
.t-wa { font: bold 20px "Liberation Sans", sans-serif; fill: #a8c4f0; stroke: #3a62b0; stroke-width: .8; text-anchor: middle; }
.t-app { font: bold 12px "Liberation Sans", sans-serif; fill: #fff; text-anchor: middle; }
.t-w { font-size: 10px; }

.input, .combo, .field { background: #fff; border: 1px solid #bcd0e8; display: flex; align-items: center; }
.fmt { flex: none; height: 28px; display: flex; align-items: center; padding-left: 5px; background: #eee; }
.fmt .i { margin: 0 2px; }
.fmt .input { height: 21px; margin-left: 9px; padding-left: 3px; font-size: 13px; width: 250px; }
.ref { flex: none; height: 29px; padding: 4px 5px; background: #eee; }
.pm-ref { height: 21px; width: 200px; padding-left: 3px; font: 13px "Liberation Sans", sans-serif; }

.combo { height: 22px; padding-left: 4px; flex: none; justify-content: space-between; font: 12px "Noto Sans", sans-serif; }
.combo u { font-size: 13px; }
.combo.font { width: 165px; }
.combo.size { width: 53px; }
.combo.z { width: 61px; }
.combo.obj { width: 120px; height: 21px; }

/* Sheet */
.sheet { flex: 1; min-height: 0; overflow: hidden; background: #fff; }
.shead { height: 19px; display: flex; background: #e6e6e6; }
.corner { width: 29px; background: #e6e6e6; border-right: 1.500px solid #000; border-bottom: 1px solid #000; }
.colA { flex: 1; background: #c8dcf2; text-align: center; font: bold 12px/18px "Liberation Sans", sans-serif; color: #222; border-bottom: 1px solid #000; padding-right: 20px; }
.srow { height: 18px; display: flex; }
.srow b { width: 29px; flex: none; text-align: center; background: #eee; font: 12px/17px "Noto Sans", sans-serif; color: #222; border-right: 1.500px solid #000; border-bottom: 1px solid #000; }
.srow i { flex: 1; border-bottom: 1px solid #bbb; margin-left: 1px; }
.srow.cur b { background: #b9d9f8; }
.srow.cur i { border: 2px solid #000; border-right: 0; }
.tabs { flex: none; height: 14px; background: #e8e8e8; }
.tabnav { width: 72px; height: 14px; display: block; }
.status { flex: none; height: 28px; display: flex; align-items: flex-start; padding: 5px 5px 0; background: #eee; border-top: 1px solid #ddd; }
.field { border: 2px solid #dcdcdc; }
.pm-f, .tm-f { height: 19px; width: 400px; }

/* TextMaker body */
.tm-rule { flex: none; height: 47px; padding: 5px 0 0 4px; display: flex; background: #e4e4e4; align-items: flex-start; }
.lbtn { width: 16px; height: 16px; border: 1px solid #888; background: #fff; position: relative; }
.lbtn i { position: absolute; left: 5px; top: 4px; width: 5px; height: 5px; border-left: 2px solid #000; border-bottom: 2px solid #000; }
.hr-gray { margin-left: 24px; width: 500px; height: 16px; background: #bbb; border: 1px solid #999; display: flex; align-items: center; padding-left: 8px; gap: 7px; }
.hr-gray em { width: 2px; height: 2px; background: #333; }
.hr-gray .long { height: 7px; width: 1px; }
.hr-gray strong { font: 12px "Noto Sans", sans-serif; color: #333; }
.tm-body { flex: none; height: 355px; display: flex; background: #e4e4e4; }
.vr {
  width: 16px;
  margin-left: 4px;
  flex: none;
  background: linear-gradient(#bbb 75px, #fff 75px);
  border: 1px solid #777;
  border-top: 0;
  height: 351px;
  overflow: hidden;
  padding-top: 4.300px;
}
.vu { height: 37.500px; display: grid; grid-auto-rows: 9.375px; justify-items: center; align-items: center; font: 13px/12px "Noto Sans", sans-serif; color: #345; }
.vu b { font-weight: 400; }
.d { width: 2px; height: 1px; background: #000; }
.l { width: 6px; height: 1px; background: #000; }
.tm-page { margin-left: 25px; flex: 1; background: #fff; box-shadow: -3px 0 6px rgba(0,0,0,.25); padding-top: 75px; }
.tm-dot { border-top: 1px dotted #999; }
.tm-hs { flex: none; height: 16px; background: #d9d9d9; padding: 3px 2px; display: flex; }
.sc { width: 10px; height: 10px; fill: none; stroke: #bdbdbd; stroke-width: 1.800; flex: none; }
.sc.dk { stroke: #555; }

/* Presentations body */
.pbody { flex: none; height: 348px; display: flex; background: #eee; }
.lpanel { width: 114px; flex: none; border-right: 1px solid #ddd; display: flex; flex-direction: column; padding-top: 1px; }
.ptabs { width: 113px; height: 21px; display: block; flex: none; }
.lrow { flex: 1; min-height: 0; display: flex; }
.thumbs { width: 95px; flex: none; background: #a9a9a9; padding: 6px 8px 0 1px; }
.thumb { width: 86px; height: 86px; background: #cfcfcf; display: flex; flex-direction: column; align-items: center; }
.thumb span { margin-left: auto; padding-right: 6px; line-height: 20px; font-size: 12.500px; color: #222; }
.tslide { width: 69px; height: 51px; background: #fff; margin-top: 5px; margin-left: 1px; box-shadow: 1px 1px 2px rgba(0,0,0,.5); }
.lsb { flex: 1; display: flex; flex-direction: column; align-items: center; justify-content: space-between; padding: 3px 0; }
.lhs { flex: none; height: 17px; display: flex; justify-content: space-between; align-items: center; padding: 0 22px 0 4px; }
.grip { width: 7px; flex: none; position: relative; }
.grip i { position: absolute; left: 2px; top: 156px; width: 4px; height: 37px; border: 1px solid #aaa; border-radius: 2px; background: #fff; }
.grip.g2 { width: 11px; border-left: 1px solid #ddd; }
.grip.g2 i { left: 2px; }
.center { width: 400px; flex: none; display: flex; flex-direction: column; }
.rrow { flex: none; height: 24px; display: flex; padding-top: 2px; padding-left: 3px; }
.cross {
  width: 20px; height: 20px; background:
    linear-gradient(#000, #000) center / 1px 16px no-repeat,
    linear-gradient(#000, #000) center / 16px 1px no-repeat,
    #eee;
  border: 1px solid #bbb;
  flex: none;
}
.hruler { display: flex; margin-left: 3px; flex: 1; height: 23px; }
.hm { width: 16px; flex: none; height: 20px; background: #e8e8e8; border: 1px solid #ccc; }
.hw { width: 342px; flex: none; background: #fff; border-top: 1px solid #000; border-bottom: 1px solid #000; height: 22px; padding-left: 6px; display: flex; align-items: center; font: 11px "Noto Sans", sans-serif; color: #222; margin-top: 1px; }
.hw i, .hw b { width: 13.600px; text-align: center; font-weight: 400; flex: none; white-space: nowrap; }
.crow { flex: 1; min-height: 0; display: flex; }
.vcol { width: 25px; flex: none; display: flex; flex-direction: column; padding: 1px 4px 0; border-right: 0; }
.vtop { flex: none; height: 26px; border: 1px solid #888; border-left-color: #000; background: #e8e8e8; }
.vw { flex: none; height: 255px; background: #fff; border-left: 1px solid #000; border-right: 1px solid #000; padding-top: 8px; display: flex; flex-direction: column; align-items: center; overflow: hidden; font: 11px "Noto Sans", sans-serif; color: #223; }
.vw i { height: 13.350px; width: 100%; flex: none; display: flex; align-items: center; justify-content: center; }
.vw i::before { content: ""; width: 3px; height: 1px; background: #000; display: block; }
.vw b { height: 13.350px; font-weight: 400; line-height: 13px; flex: none; }
.vbot { flex: 1; background: #ececec; border-left: 1px solid #999; border-right: 1px solid #999; }
.canvas { flex: 1; background: #a9a9a9; padding: 25px 0 0 15px; border-left: 1px solid #000; box-shadow: inset 3px 3px 4px rgba(0,0,0,.18); overflow: hidden; }
.slide { width: 342px; height: 256px; background: #fff; box-shadow: 0 0 6px rgba(0,0,0,.3); display: flow-root; }
.ph {
  text-align: center;
  color: #111;
  white-space: nowrap;
  background-image:
    repeating-linear-gradient(90deg, #000 0 4px, transparent 4px 7px),
    repeating-linear-gradient(90deg, #000 0 4px, transparent 4px 7px),
    repeating-linear-gradient(0deg, #000 0 4px, transparent 4px 7px),
    repeating-linear-gradient(0deg, #000 0 4px, transparent 4px 7px);
  background-size: 100% 1px, 100% 1px, 1px 100%, 1px 100%;
  background-position: 0 0, 0 100%, 0 0, 100% 0;
  background-repeat: no-repeat;
}
.ph1 { margin: 80px 0 0 26px; width: 290px; height: 52px; padding-top: 1px; font-size: 22.500px; line-height: 24px; }
.ph2 { margin: 13px 0 0 52px; width: 238px; height: 66px; padding-top: 2px; font-size: 16px; line-height: 17px; }
.chs { flex: none; height: 16px; display: flex; justify-content: space-between; background: #eee; }
.sbb { width: 15px; height: 15px; background: #cccccc; display: flex; align-items: center; justify-content: center; flex: none; }
.sbb .sc { stroke: #aaa; }
.vsb { width: 15px; flex: none; display: flex; flex-direction: column; background: #eee; }
.vfill { flex: 1; }
.sbb.dn { margin-bottom: 1px; }
.nav { height: 16px; background: #fff; margin-bottom: 0; display: flex; align-items: center; justify-content: center; border-top: 1px solid #eee; flex: none; }
.nav svg { width: 12px; height: 12px; fill: #000; }
.nav .navc { fill: #fff; stroke: #000; stroke-width: 1; }
.rpanel { flex: 1; min-width: 0; padding: 3px 0 0 0; display: flex; flex-direction: column; }
.ricons { height: 24px; flex: none; display: flex; align-items: center; margin-bottom: 8px; padding-bottom: 0; position: relative; }
.ricons::after { content: ""; position: absolute; left: 0; right: 3px; top: 31px; border-top: 1px solid #ddd; }
.ricons .sel { margin-left: 2px; }
.tri { margin-left: 15px; width: 0; height: 0; border: 4px solid transparent; border-top: 5px solid #000; border-bottom: 0; }
.rh { font-size: 12px; font-weight: 700; line-height: 18px; margin-top: 8px; margin-left: 1px; color: #222; }
.llist { flex: none; margin: 3px 3px 0 1px; height: 259px; display: flex; background: #fff; border-top: 1px solid #ddd; overflow: hidden; }
.lwrap { flex: 1; display: flex; flex-direction: column; align-items: center; padding-top: 2px; }
.picked { width: 94px; height: 83px; flex: none; border: 2px solid #3a98f2; outline: 1px dotted #000; outline-offset: -4px; display: flex; align-items: center; justify-content: center; margin-bottom: 8px; }
.lt { width: 82px; height: 69px; flex: none; background: #fff; border: 1.500px solid #000; box-shadow: 3px 3px 0 #000; display: flex; flex-direction: column; align-items: center; padding-top: 23px; }
.lt.plain { margin-bottom: 15px; border-color: #777; padding-top: 0; }
.lt.top { padding-top: 4px; }
.b1 { width: 69px; height: 5px; background: #808080; }
.b2 { width: 35px; height: 4px; background: #808080; margin-top: 9px; }
.b3 { width: 69px; height: 5px; background: #808080; }
.lsbar { width: 15px; flex: none; display: flex; flex-direction: column; align-items: center; background: #fff; padding-top: 1px; }
.lsbar i { width: 15px; height: 60px; background: #c6c6c6; margin-top: 2px; flex: none; }
.lsbar svg:last-child { margin-top: auto; margin-bottom: 3px; }
.lname { margin-top: 4px; margin-left: 1px; line-height: 18px; font-size: 12px; }
.pstat { flex: 1; display: flex; align-items: center; padding-left: 6px; background: #eee; border-top: 1px solid #ddd; }
.pstat .field { height: 19px; flex: none; padding-left: 5px; font-size: 12px; line-height: 15px; }
.pstat .f1 { width: 175px; margin-right: 8px; }
.pstat .f2 { width: 92px; margin-right: 7px; }
.pstat .f3 { width: 93px; margin-right: 7px; }
.pstat .f4 { width: 42px; margin-right: 6px; justify-content: center; padding: 0; }
.pstat .c { margin-left: -2px; }
.zb { margin: 0; }
.zb1 { margin-left: 5px; }
.slider { width: 110px; height: 14px; position: relative; flex: none; }
.slider::before { content: ""; position: absolute; left: 2px; right: 2px; top: 6px; height: 1px; background: #c8c8c8; }
.knob { position: absolute; left: 11px; top: 3px; width: 8px; height: 8px; border-radius: 50%; background: #f2c04a; border: 1px solid #d49a2a; }
.tick { position: absolute; left: 53px; top: 3px; width: 2px; height: 8px; border-left: 2px dotted #bbb; }

/* Taskbar */
.taskbar {
  position: absolute;
  left: 0;
  right: 0;
  bottom: 0;
  height: 41px;
  display: flex;
  align-items: center;
  background: rgba(150,70,35,.22);
  color: #fff;
}
.tb { width: 40px; height: 41px; flex: none; display: flex; align-items: center; justify-content: center; position: relative; }
.tb svg { width: 24px; height: 24px; }
.start { width: 52px; padding-right: 8px; }
.start svg { width: 16px; height: 16px; }
.tb.uline::after, .tb.active::after { content: ""; position: absolute; bottom: 0; left: 5px; right: 5px; height: 2px; background: #f2cdb8; }
.tb.active { background: #a3482a; width: 38px; margin-left: -2px; }
.tb.active::after { left: 0; right: 0; }
.tb.note { margin-left: 1px; height: 24px; align-items: flex-start; }
.tmore { font: bold 13px "DejaVu Sans", sans-serif; margin-top: -14px; width: 14px; margin-left: -4px; flex: none; }
.tray { flex: none; }
.t-usb { width: 18px; height: 11px; margin-left: 1px; }
.t-net { width: 19px; height: 17px; margin-left: 10px; }
.t-mon { width: 18px; height: 18px; margin-left: 6px; }
.t-snd { width: 16px; height: 14px; margin-left: 4px; }
.ime { font-size: 18px; font-weight: 300; margin-left: 8px; width: 16px; flex: none; }
.clock { margin-left: auto; width: 78px; flex: none; margin-right: 2px; display: flex; flex-direction: column; align-items: center; font-size: 12.500px; line-height: 19px; }
```
